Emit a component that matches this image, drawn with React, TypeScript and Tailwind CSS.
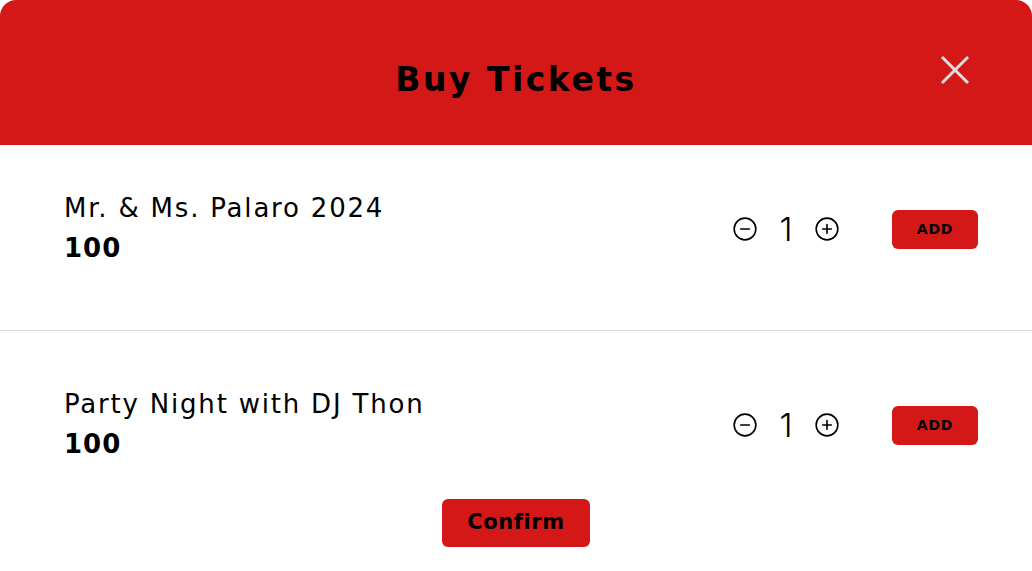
import { CircleMinus, CirclePlus } from "lucide-react";

const tickets = [
  { name: "Mr. & Ms. Palaro 2024", price: 100, qty: 1 },
  { name: "Party Night with DJ Thon", price: 100, qty: 1 },
];

const TicketRow = ({ name, price, qty, className }: { name: string; price: number; qty: number; className: string }) => {
  return (
    <div className={`flex items-center justify-between pl-[64px] pr-[54px] ${className}`}>
      <div className="flex flex-col">
        <p className="text-[26px] leading-[34px] tracking-[1.8px] text-black">{name}</p>
        <span className="mt-[6px] text-[26px] leading-[34px] tracking-[1px] font-bold text-black">{price}</span>
      </div>
      <div className="flex items-center mt-[2px]">
        <button className="text-black">
          <CircleMinus size={26} strokeWidth={1.5} />
        </button>
        <span className="w-[56px] text-center text-[33px] leading-none font-light text-black font-[Inter]">{qty}</span>
        <button className="text-black">
          <CirclePlus size={26} strokeWidth={1.5} />
        </button>
        <button className="ml-[52px] w-[86px] h-[39px] rounded-md bg-[#d41818] text-[14px] tracking-[0.8px] font-semibold text-black">
          ADD
        </button>
      </div>
    </div>
  );
};

export default function App() {
  return (
    <div className="w-[1032px] h-[571px] bg-white overflow-hidden" style={{ fontFamily: "'DejaVu Sans', sans-serif" }}>
      <header className="relative h-[145px] rounded-t-2xl bg-[#d41818] flex items-center justify-center pt-[14px]">
        <h1 className="text-[33px] font-bold tracking-[2.5px] text-black">Buy Tickets</h1>
        <button className="absolute right-[62px] top-[55px]">
          <svg width="30" height="30" viewBox="0 0 30 30" stroke="#dedede" strokeWidth="3">
            <line x1="2" y1="2" x2="28" y2="28" />
            <line x1="28" y1="2" x2="2" y2="28" />
          </svg>
        </button>
      </header>
      <TicketRow {...tickets[0]} className="pt-[46px] pb-[65px] border-b border-[#dcdcdc]" />
      <TicketRow {...tickets[1]} className="pt-[56px] pb-[38px]" />
      <div className="flex justify-center">
        <button className="w-[148px] h-[48px] rounded-md bg-[#d41818] text-[21px] tracking-[0.6px] font-semibold text-black">
          Confirm
        </button>
      </div>
    </div>
  );
}
